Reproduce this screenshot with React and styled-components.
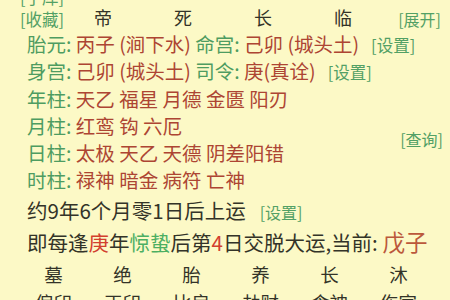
import styled, { createGlobalStyle } from "styled-components";

const GlobalStyle = createGlobalStyle`
  html, body {
    margin: 0;
    padding: 0;
    background: #fcf9c6;
    overflow: hidden;
  }
  body {
    font-family: "Noto Sans CJK SC", "Noto Sans", sans-serif;
    color: #333328;
  }
`;

const Page = styled.div`
  width: 450px;
  margin-top: -14px;
  background: #fcf9c6;
`;

const TopBar = styled.div`
  display: flex;
  align-items: flex-end;
  padding-right: 9px;
`;

const LinkStack = styled.div`
  display: flex;
  flex-direction: column;
  align-items: flex-start;
  width: 43px;
  margin-left: 20px;
  flex-shrink: 0;
`;

const Link = styled.span`
  color: #52a065;
  font-size: ${(p) => p.$size || 16}px;
  line-height: 22px;
  white-space: nowrap;
  margin-left: ${(p) => (p.$right ? "auto" : `${p.$gap || 0}px`)};
`;

const SideLink = styled.span`
  display: block;
  color: #52a065;
  font-size: 16.5px;
  line-height: 22px;
  white-space: nowrap;
`;

const Star = styled.span`
  flex: 0 0 80px;
  text-align: center;
  font-size: 18px;
  line-height: 22px;
  padding-bottom: 2px;
  color: #333328;
`;

const InfoRow = styled.div`
  padding-left: 27px;
  font-size: 19.5px;
  line-height: 27.3px;
  height: 27.3px;
  white-space: nowrap;
`;

const Label = styled.span`
  color: #4e9c61;
`;

const Value = styled.span`
  color: ${(p) => p.$color || "#ad4533"};
  font-size: ${(p) => (p.$big ? "22.5px" : "inherit")};
`;

const PillarBlock = styled.div`
  display: flex;
  align-items: center;
  justify-content: space-between;
  padding-right: 7px;
`;

const Pillars = styled.div`
  display: flex;
  flex-direction: column;
`;

const Line = styled.div`
  padding-left: 27px;
  font-size: 20.5px;
  height: ${(p) => p.$h}px;
  line-height: ${(p) => p.$h}px;
  white-space: nowrap;
  color: #333328;
`;

const CycleGrid = styled.div`
  display: grid;
  grid-template-columns: repeat(7, 69px);
  padding-left: 19px;
  height: ${(p) => p.$h}px;
  line-height: ${(p) => p.$h}px;
  font-size: 18.5px;
  color: #333328;
  white-space: nowrap;
`;

const Cell = styled.span`
  text-align: center;
`;

const pillars = [
  { label: "年柱", items: "天乙 福星 月德 金匮 阳刃" },
  { label: "月柱", items: "红鸾 钩 六厄" },
  { label: "日柱", items: "太极 天乙 天德 阴差阳错" },
  { label: "时柱", items: "禄神 暗金 病符 亡神" },
];

const stages = ["墓", "绝", "胎", "养", "长", "沐"];
const gods = ["偏印", "正印", "比肩", "劫财", "食神", "伤官", "正官"];

export default function App() {
  return (
    <>
      <GlobalStyle />
      <Page>
        <TopBar>
          <LinkStack>
            <SideLink>[子库]</SideLink>
            <SideLink>[收藏]</SideLink>
          </LinkStack>
          <Star>帝</Star>
          <Star>死</Star>
          <Star>长</Star>
          <Star>临</Star>
          <Link $right>[展开]</Link>
        </TopBar>

        <InfoRow>
          <Label>胎元: </Label>
          <Value>丙子 (涧下水) </Value>
          <Label>命宫: </Label>
          <Value>己卯 (城头土)</Value>
          <Link $size={16.5} $gap={12}>[设置]</Link>
        </InfoRow>
        <InfoRow>
          <Label>身宫: </Label>
          <Value>己卯 (城头土) </Value>
          <Label>司令: </Label>
          <Value>庚(真诠)</Value>
          <Link $size={16.5} $gap={12}>[设置]</Link>
        </InfoRow>

        <PillarBlock>
          <Pillars>
            {pillars.map((p) => (
              <InfoRow key={p.label}>
                <Label>{p.label}: </Label>
                <Value>{p.items}</Value>
              </InfoRow>
            ))}
          </Pillars>
          <Link>[查询]</Link>
        </PillarBlock>

        <Line $h={32}>
          约9年6个月零1日后上运
          <Link $gap={14}>[设置]</Link>
        </Line>
        <Line $h={30}>
          即每逢<Value $color="#d2402e">庚</Value>年
          <Value $color="#4caf62">惊蛰</Value>后第
          <Value $color="#d2402e">4</Value>日交脱大运,当前:{" "}
          <Value $color="#bb583b" $big>
            戊子
          </Value>
        </Line>

        <CycleGrid $h={36}>
          {stages.map((s) => (
            <Cell key={s}>{s}</Cell>
          ))}
        </CycleGrid>
        <CycleGrid $h={20}>
          {gods.map((g) => (
            <Cell key={g}>{g}</Cell>
          ))}
        </CycleGrid>
      </Page>
    </>
  );
}
